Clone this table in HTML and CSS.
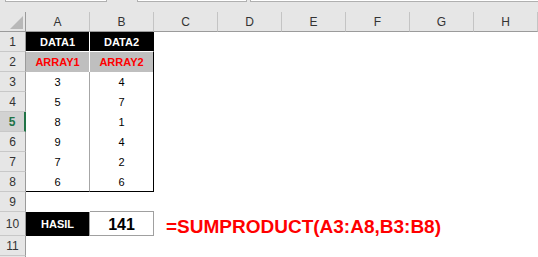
FILE: index.html
```html
<!DOCTYPE html>
<html lang="id">
<head>
    <meta charset="UTF-8">
    <title>SUMPRODUCT</title>
    <link rel="stylesheet" href="styles.css">
</head>
<body>
    <div class="sheet">
        <div class="toolbar">
            <span class="box name-box"></span>
            <span class="box fx-box"></span>
            <span class="box formula-box"></span>
        </div>

        <div class="grid">
            <!-- column headers -->
            <div class="corner"><span class="corner-mark"></span></div>
            <div class="col-head">A</div>
            <div class="col-head">B</div>
            <div class="col-head">C</div>
            <div class="col-head">D</div>
            <div class="col-head">E</div>
            <div class="col-head">F</div>
            <div class="col-head">G</div>
            <div class="col-head">H</div>

            <!-- 1 -->
            <div class="row-head">1</div>
            <div class="cell title col-a">DATA1</div>
            <div class="cell title col-b">DATA2</div>
            <div class="cell blank"></div>

            <!-- 2 -->
            <div class="row-head">2</div>
            <div class="cell label col-a">ARRAY1</div>
            <div class="cell label col-b">ARRAY2</div>
            <div class="cell blank"></div>

            <!-- 3..8 -->
            <div class="row-head">3</div>
            <div class="cell num col-a">3</div>
            <div class="cell num col-b">4</div>
            <div class="cell blank"></div>

            <div class="row-head">4</div>
            <div class="cell num col-a">5</div>
            <div class="cell num col-b">7</div>
            <div class="cell blank"></div>

            <div class="row-head active">5</div>
            <div class="cell num col-a">8</div>
            <div class="cell num col-b">1</div>
            <div class="cell blank"></div>

            <div class="row-head">6</div>
            <div class="cell num col-a">9</div>
            <div class="cell num col-b">4</div>
            <div class="cell blank"></div>

            <div class="row-head">7</div>
            <div class="cell num col-a">7</div>
            <div class="cell num col-b">2</div>
            <div class="cell blank"></div>

            <div class="row-head">8</div>
            <div class="cell num col-a last">6</div>
            <div class="cell num col-b last">6</div>
            <div class="cell blank"></div>

            <!-- 9 -->
            <div class="row-head">9</div>
            <div class="cell"></div>
            <div class="cell above-result"></div>
            <div class="cell blank"></div>

            <!-- 10 -->
            <div class="row-head">10</div>
            <div class="cell result-label">HASIL</div>
            <div class="cell result-value">141</div>
            <div class="cell formula">=SUMPRODUCT(A3:A8,B3:B8)</div>

            <!-- 11, then the edge of the next row -->
            <div class="row-head">11</div>
            <div class="cell wide"></div>
            <div class="row-head"></div>
            <div class="cell wide"></div>
        </div>
    </div>
</body>
</html>
```

FILE: styles.css
```css
* {
    box-sizing: border-box;
}
body {
    margin: 0;
    background: #fff;
    font-family: 'Liberation Sans', Arial, sans-serif;
    overflow: hidden;
}
.sheet {
    width: 538px;
    height: 257px;
    overflow: hidden;
}

/* strip left of the formula bar */
.toolbar {
    height: 12px;
    background: #e6e6e6;
    display: flex;
    align-items: flex-start;
}
.box {
    display: block;
    height: 2px;
    background: #fff;
    border: 1px solid #b0b0b0;
    border-top: 0;
}
.name-box { width: 102px; margin-left: 5px; }
.fx-box { width: 110px; margin-left: 30px; }
.formula-box { flex: 1; margin-left: 3px; border-right: 0; }

.grid {
    display: grid;
    grid-template-columns: 26px repeat(8, 64px);
    grid-template-rows: 20px repeat(9, 20px) 24px 20px 20px;
}

/* headers */
.corner {
    background: #e6e6e6;
    border-right: 1px solid #9b9b9b;
    border-bottom: 1px solid #9b9b9b;
    position: relative;
}
.corner-mark {
    position: absolute;
    left: 10px;
    top: 4px;
    width: 13px;
    height: 13px;
    background: #b8b8b8;
    clip-path: polygon(100% 0, 100% 100%, 0 100%);
}
.col-head {
    background: #e6e6e6;
    border-right: 1px solid #c4c4c4;
    border-bottom: 1px solid #9b9b9b;
    color: #333;
    font-size: 12px;
    display: flex;
    align-items: center;
    justify-content: center;
    padding-top: 1px;
}
.row-head {
    grid-column: 1;
    background: #e6e6e6;
    border-right: 1px solid #9b9b9b;
    border-bottom: 1px solid #c8c8c8;
    color: #333;
    font-size: 12px;
    display: flex;
    align-items: center;
    justify-content: center;
}
.row-head.active {
    background: #d2d2d2;
    color: #217346;
    font-weight: bold;
    border-right: 2px solid #217346;
}

/* cells */
.cell {
    display: flex;
    align-items: center;
    justify-content: center;
    font-size: 11px;
    color: #000;
}
.blank,
.wide {
    grid-column: 4 / span 6;
}
.wide {
    grid-column: 2 / span 8;
}
.col-a { border-right: 1px solid #a6a6a6; }
.col-b { border-right: 1px solid #000; }
.last { border-bottom: 1px solid #000; }

.title {
    background: #000;
    color: #fff;
    font-weight: bold;
    border-bottom: 1px solid #fff;
}
.title.col-a { border-right-color: #fff; }
.label {
    background: #bfbfbf;
    color: #ff0000;
    font-weight: bold;
}
.label.col-a { border-right-color: #fff; }

.above-result { border-bottom: 1px solid #a0a0a0; }
.result-label {
    background: #000;
    color: #fff;
    font-size: 11px;
    font-weight: bold;
    border-right: 1px solid #a0a0a0;
}
.result-value {
    font-size: 16px;
    font-weight: bold;
    border-right: 1px solid #a0a0a0;
    border-bottom: 1px solid #a0a0a0;
    padding-top: 2px;
}
.formula {
    justify-content: flex-start;
    padding-left: 12px;
    padding-top: 5px;
    color: #ff0000;
    font-size: 19px;
    font-weight: bold;
    white-space: nowrap;
}
```
